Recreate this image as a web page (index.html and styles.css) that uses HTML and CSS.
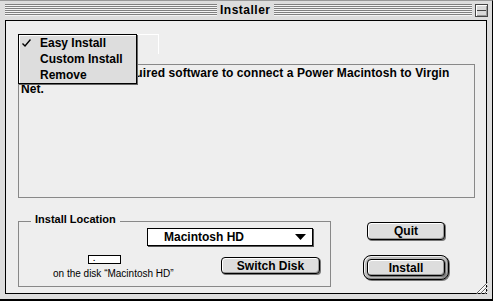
FILE: index.html
```html
<!DOCTYPE html>
<html>
<head>
    <title>Installer</title>
    <link rel="stylesheet" href="styles.css">
</head>
<body>
    <div class="window">
        <!-- Title bar -->
        <div class="titlebar">
            <div class="stripes stripes-left"></div>
            <div class="title">Installer</div>
            <div class="stripes stripes-right"></div>
            <div class="collapse-box"></div>
        </div>

        <div class="content">
            <div class="mode-popup"></div>
            <div class="description">This installs the required software to connect a Power Macintosh to Virgin Net.</div>

            <div class="bottom-row">
                <!-- Install location group -->
                <div class="group">
                    <div class="group-label">Install Location</div>
                    <div class="disk-popup">
                        <span>Macintosh HD</span>
                        <svg width="11" height="6" viewBox="0 0 11 6"><polygon points="0,0 11,0 5.5,6" fill="#000"/></svg>
                    </div>
                    <div class="disk-row">
                        <div class="disk-info">
                            <div class="disk-field">.</div>
                            <div class="disk-caption">on the disk &ldquo;Macintosh HD&rdquo;</div>
                        </div>
                        <button class="btn switch-btn">Switch Disk</button>
                    </div>
                </div>

                <div class="actions">
                    <button class="btn">Quit</button>
                    <div class="default-ring">
                        <button class="btn install-btn">Install</button>
                    </div>
                </div>
            </div>

            <!-- Open popup menu -->
            <ul class="menu">
                <li><span class="mark"><svg width="9" height="8" viewBox="0 0 9 8"><path d="M0.5 4.5 L3 7 L8.5 0.5" fill="none" stroke="#000" stroke-width="1.4"/></svg></span>Easy Install</li>
                <li><span class="mark"></span>Custom Install</li>
                <li><span class="mark"></span>Remove</li>
            </ul>
        </div>

        <svg class="grow-box" width="12" height="12" viewBox="0 0 12 12">
            <path d="M0.5 11.5 L11.5 0.5 M4.5 11.5 L11.5 4.5 M8.5 11.5 L11.5 8.5" stroke="#666" stroke-width="1"/>
            <path d="M1.5 11.5 L11.5 1.5 M5.5 11.5 L11.5 5.5 M9.5 11.5 L11.5 9.5" stroke="#fff" stroke-width="1"/>
        </svg>
    </div>
</body>
</html>
```

FILE: styles.css
```css
* {
    box-sizing: border-box;
}
body {
    margin: 0;
    font-family: "Liberation Sans", Arial, sans-serif;
    color: #000;
}
.window {
    position: relative;
    width: 493px;
    height: 301px;
    background: #dddddd;
    border-top: 1px solid #999;
    border-right: 1px solid #000;
    border-bottom: 2px solid #000;
}

/* title bar */
.titlebar {
    display: flex;
    height: 19px;
    padding: 0 4px 0 5px;
}
.stripes {
    height: 12px;
    margin-top: 3px;
    background: repeating-linear-gradient(to bottom, #808080 0, #808080 1px, #f4f4f4 1px, #f4f4f4 2px);
}
.stripes-left {
    width: 212px;
}
.stripes-right {
    flex: 1;
}
.title {
    margin: 0 3px;
    font-size: 12px;
    font-weight: bold;
    line-height: 19px;
    letter-spacing: 0.5px;
}
.collapse-box {
    width: 13px;
    height: 13px;
    margin: 3px 0 0 3px;
    border: 1px solid #444;
    background: linear-gradient(to bottom, #d8d8d8 0, #d8d8d8 5px, #444 5px, #444 6px, #d8d8d8 6px);
    box-shadow: inset 1px 1px 0 #fff, inset -1px -1px 0 #999;
}

/* content area */
.content {
    position: relative;
    height: 274px;
    margin: 0 5px;
    padding: 13px 0 0 12px;
    border: 1px solid #000;
    background: #eeeeee;
}
.mode-popup {
    width: 141px;
    height: 20px;
    border-top: 1px solid #fff;
    border-right: 1px solid #fff;
}
.description {
    width: 457px;
    height: 134px;
    margin-top: 10px;
    padding: 0 10px 0 2px;
    border: 1px solid #888;
    font-size: 12px;
    font-weight: bold;
    line-height: 16px;
    letter-spacing: 0.08px;
}
.bottom-row {
    display: flex;
    margin-top: 23px;
}
.group {
    width: 313px;
    height: 66px;
    border: 1px solid #888;
}
.group-label {
    width: fit-content;
    margin: -9px 0 0 12px;
    padding: 0 4px;
    background: #eeeeee;
    font-size: 11px;
    font-weight: bold;
    line-height: 13px;
}
.disk-popup {
    display: flex;
    align-items: center;
    justify-content: space-between;
    width: 166px;
    height: 18px;
    margin: 2px 0 0 128px;
    padding: 0 6px 0 16px;
    border: 1px solid #000;
    background: #fff;
    box-shadow: 1px 1px 0 #555;
    font-size: 12px;
    font-weight: bold;
}
.disk-row {
    display: flex;
    margin-top: 9px;
}
.disk-info {
    width: 190px;
}
.disk-field {
    width: 33px;
    height: 9px;
    margin-left: 69px;
    padding-left: 4px;
    border: 1px solid #000;
    background: #fff;
    font-size: 8px;
    font-weight: bold;
    line-height: 6px;
}
.disk-caption {
    margin: 4px 0 0 34px;
    font-size: 10px;
    line-height: 12px;
}

/* buttons */
.btn {
    width: 78px;
    height: 18px;
    padding: 0;
    border: 1px solid #000;
    border-radius: 4px;
    background: #dddddd;
    box-shadow: inset 1px 1px 0 #fff, inset -1px -1px 0 #999, 1px 1px 0 #777;
    font-family: "Liberation Sans", Arial, sans-serif;
    font-size: 12px;
    font-weight: bold;
    color: #000;
}
.switch-btn {
    width: 99px;
    height: 17px;
    margin: 2px 0 0 12px;
}
.actions {
    display: flex;
    flex-direction: column;
    align-items: center;
    width: 86px;
    margin: 1px 0 0 32px;
}
.default-ring {
    margin-top: 15px;
    padding: 3px;
    border: 1px solid #000;
    border-radius: 8px;
    background: #bbbbbb;
    box-shadow: inset 1px 1px 0 #eee, inset -1px -1px 0 #888, 1px 1px 0 #777;
}
.install-btn {
    display: block;
    height: 17px;
}

/* popup menu */
.menu {
    position: absolute;
    left: 12px;
    top: 13px;
    width: 119px;
    margin: 0;
    padding: 0;
    list-style: none;
    border: 1px solid #000;
    background: #dddddd;
    box-shadow: inset 1px 1px 0 #fff, 1px 1px 0 #666;
}
.menu li {
    display: flex;
    align-items: center;
    height: 16px;
    font-size: 12px;
    font-weight: bold;
}
.mark {
    display: flex;
    width: 21px;
    padding-left: 3px;
}

.grow-box {
    position: absolute;
    right: 4px;
    bottom: 5px;
}
```
